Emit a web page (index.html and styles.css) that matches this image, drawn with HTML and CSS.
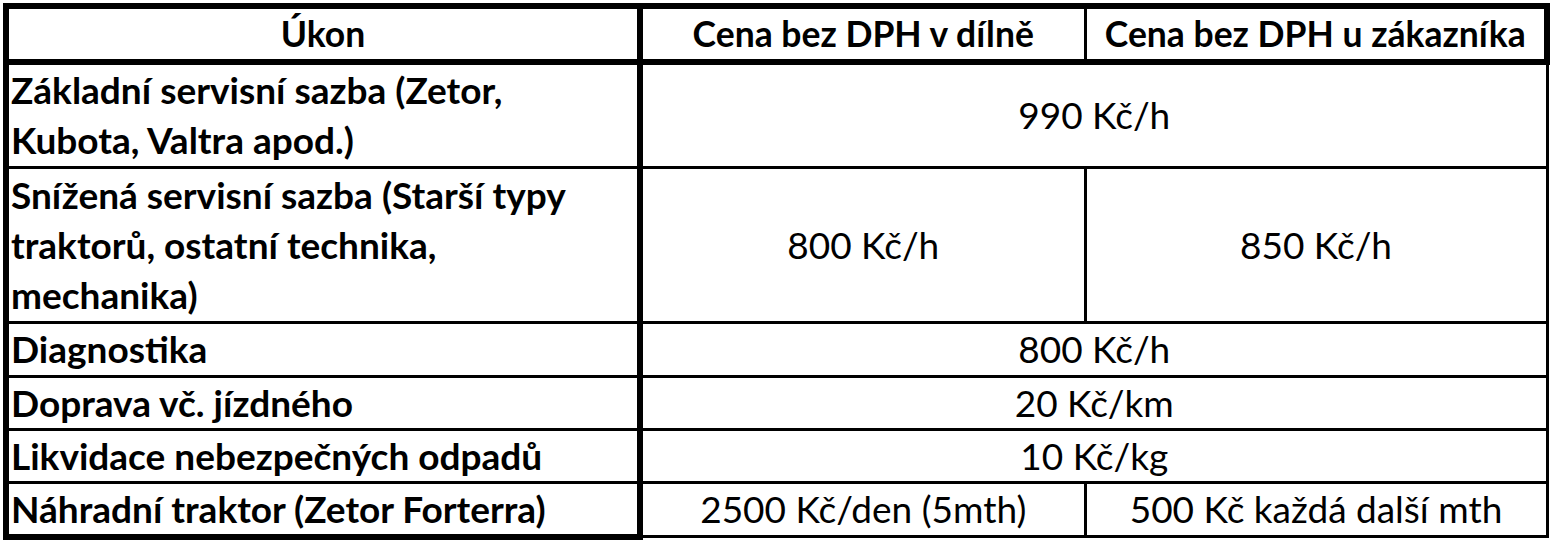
FILE: index.html
```html
<!DOCTYPE html>
<html lang="cs">
<head>
<meta charset="utf-8">
<title>Ceník servisu</title>
<link rel="stylesheet" href="styles.css">
</head>
<body>
<table class="price-table">
  <colgroup>
    <col class="col-task">
    <col class="col-shop">
    <col class="col-site">
  </colgroup>
  <thead>
    <tr class="row-head">
      <th class="h-task">Úkon</th>
      <th class="h-shop">Cena bez DPH v dílně</th>
      <th class="h-site">Cena bez DPH u zákazníka</th>
    </tr>
  </thead>
  <tbody>
    <tr class="row-2">
      <td class="label">Základní servisní sazba (Zetor,<br>Kubota, Valtra apod.)</td>
      <td class="val" colspan="2">990 Kč/h</td>
    </tr>
    <tr class="row-3">
      <td class="label">Snížená servisní sazba (Starší typy<br>traktorů, ostatní technika,<br>mechanika)</td>
      <td class="val">800 Kč/h</td>
      <td class="val">850 Kč/h</td>
    </tr>
    <tr class="row-1">
      <td class="label">Diagnostika</td>
      <td class="val" colspan="2">800 Kč/h</td>
    </tr>
    <tr class="row-1b">
      <td class="label">Doprava vč. jízdného</td>
      <td class="val" colspan="2">20 Kč/km</td>
    </tr>
    <tr class="row-1b">
      <td class="label">Likvidace nebezpečných odpadů</td>
      <td class="val" colspan="2">10 Kč/kg</td>
    </tr>
    <tr class="row-1 row-last">
      <td class="label">Náhradní traktor (Zetor Forterra)</td>
      <td class="val">2500 Kč/den (5mth)</td>
      <td class="val">500 Kč každá další mth</td>
    </tr>
  </tbody>
</table>
</body>
</html>
```
FILE: styles.css
```css
html, body {
  margin: 0;
  padding: 0;
  background: #ffffff;
}

.price-table {
  margin: 3px 0 0 3px;
  border-collapse: collapse;
  table-layout: fixed;
  width: 1547px;
  font-family: Lato, "Open Sans", sans-serif;
  font-size: 37px;
  line-height: 50px;
  color: #000;
}

.col-task { width: 634px; }
.col-shop { width: 445px; }

.price-table th,
.price-table td {
  border: 3px solid #000;
  padding: 0 2px;
  vertical-align: middle;
  overflow: hidden;
  white-space: nowrap;
}

.price-table th {
  font-size: 35.5px;
  font-weight: 700;
  text-align: center;
  border-top-width: 6px;
  border-bottom-width: 6px;
}

.price-table th.h-task {
  border-left-width: 6px;
  border-right-width: 6px;
}

.price-table th.h-site {
  border-right-width: 6px;
}

.price-table td.label {
  font-weight: 700;
  text-align: left;
  border-left-width: 6px;
  border-right-width: 6px;
  padding-left: 2px;
}

.price-table td.val {
  font-weight: 400;
  text-align: center;
}

.row-last td.label {
  border-bottom-width: 6px;
}

.row-head { height: 55px; }
.row-2 { height: 105px; }
.row-3 { height: 155px; }
.row-1 { height: 54px; }
.row-1b { height: 53px; }
```
